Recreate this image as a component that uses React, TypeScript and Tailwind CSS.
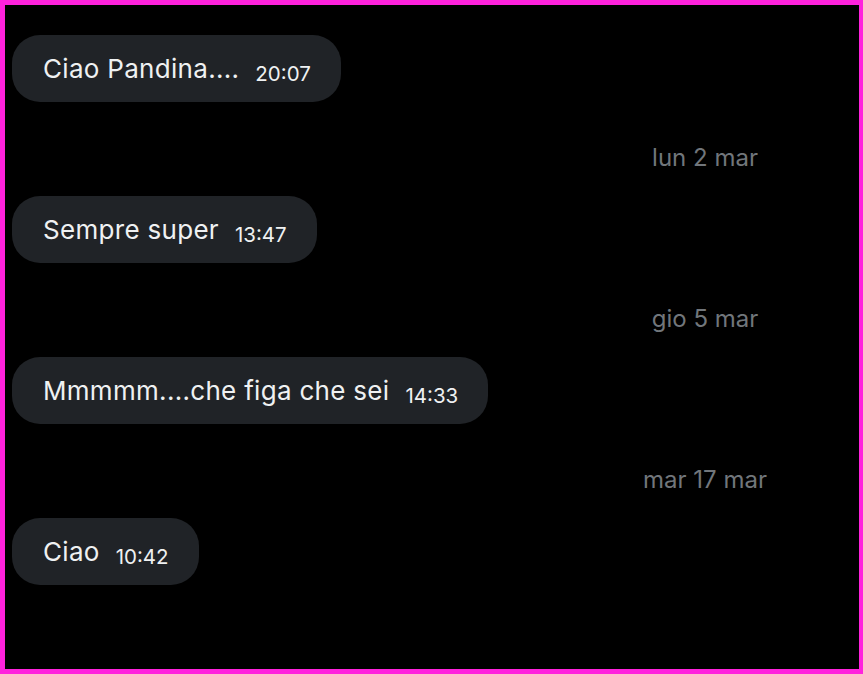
const messages = [
  { text: 'Ciao Pandina....', time: '20:07', date: 'lun 2 mar' },
  { text: 'Sempre super', time: '13:47', date: 'gio 5 mar' },
  { text: 'Mmmmm....che figa che sei', time: '14:33', date: 'mar 17 mar' },
  { text: 'Ciao', time: '10:42', date: null },
];

function Bubble({ text, time }: { text: string; time: string }) {
  return (
    <div className="flex">
      <div className="flex items-start gap-4 h-[67px] pl-[31px] pr-[30px] pt-[18px] rounded-[28px] bg-[#202327]">
        <span className="text-[26px] leading-[32px] tracking-[0.3px] text-[#eff1f2]">{text}</span>
        <span className="text-[20.5px] leading-[26px] mt-[8px] text-[#eff1f2]">{time}</span>
      </div>
    </div>
  );
}

export default function App() {
  return (
    <div
      className="w-[863px] h-[674px] bg-black border-[#ff22dd] border-t-[5px] border-l-[5px] border-b-[5px] border-r-[4px] overflow-hidden"
      style={{ fontFamily: 'Inter, "Noto Sans", sans-serif' }}
    >
      <div className="flex flex-col pt-[30px] pl-[7px]">
        {messages.map((m) => (
          <div key={m.time} className="flex flex-col">
            <Bubble text={m.text} time={m.time} />
            {m.date && (
              <div className="flex justify-center pl-[539px] h-[94px] pt-[41px]">
                <span className="text-[24px] leading-[30px] text-[#71767b]">{m.date}</span>
              </div>
            )}
          </div>
        ))}
      </div>
    </div>
  );
}
